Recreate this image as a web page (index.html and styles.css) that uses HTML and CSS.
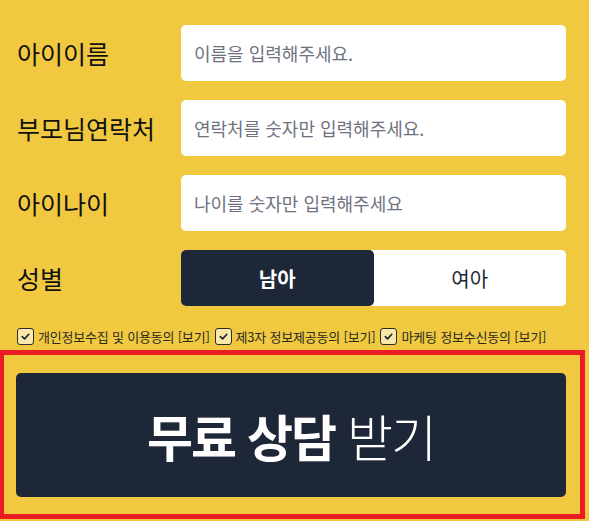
FILE: index.html
```html
<!DOCTYPE html>
<html lang="ko">
<head>
    <meta charset="UTF-8">
    <meta name="viewport" content="width=device-width, initial-scale=1.0">
    <title>무료 상담 신청</title>
    <link rel="stylesheet" href="styles.css">
</head>
<body>

    <form class="consult-form">
        <div class="fields">
            <label class="field-label" for="child-name">아이이름</label>
            <input class="field-input" type="text" id="child-name" placeholder="이름을 입력해주세요.">

            <label class="field-label" for="parent-phone">부모님연락처</label>
            <input class="field-input" type="tel" id="parent-phone" placeholder="연락처를 숫자만 입력해주세요.">

            <label class="field-label" for="child-age">아이나이</label>
            <input class="field-input" type="text" id="child-age" placeholder="나이를 숫자만 입력해주세요">

            <span class="field-label">성별</span>
            <div class="gender">
                <button type="button" class="gender-btn active">남아</button>
                <button type="button" class="gender-btn">여아</button>
            </div>
        </div>

        <div class="agree-row">
            <label class="agree">
                <span class="check"><svg viewBox="0 0 12 12" width="11" height="11"><path d="M2.5 6.2 L5 8.6 L9.6 3.6" fill="none" stroke="#1e2738" stroke-width="1.8" stroke-linecap="round" stroke-linejoin="round"/></svg></span>
                개인정보수집 및 이용동의 [보기]
            </label>
            <label class="agree">
                <span class="check"><svg viewBox="0 0 12 12" width="11" height="11"><path d="M2.5 6.2 L5 8.6 L9.6 3.6" fill="none" stroke="#1e2738" stroke-width="1.8" stroke-linecap="round" stroke-linejoin="round"/></svg></span>
                제3자 정보제공동의 [보기]
            </label>
            <label class="agree">
                <span class="check"><svg viewBox="0 0 12 12" width="11" height="11"><path d="M2.5 6.2 L5 8.6 L9.6 3.6" fill="none" stroke="#1e2738" stroke-width="1.8" stroke-linecap="round" stroke-linejoin="round"/></svg></span>
                마케팅 정보수신동의 [보기]
            </label>
        </div>

        <div class="submit-box">
            <button type="submit" class="submit-btn"><b>무료 상담</b> 받기</button>
        </div>
    </form>

</body>
</html>
```

FILE: styles.css
```css
body {
    margin: 0;
    background: #f1c940;
    font-family: "Noto Sans CJK KR", "Noto Sans", sans-serif;
    color: #111;
    overflow: hidden;
}
.consult-form {
    padding-top: 25px;
}
.fields {
    display: grid;
    grid-template-columns: 164px 385px;
    grid-auto-rows: 56px;
    row-gap: 19px;
    padding-left: 17px;
}
.field-label {
    display: flex;
    align-items: center;
    font-size: 25px;
    font-weight: 400;
    color: #111;
}
.field-input {
    border: none;
    border-radius: 5px;
    background: white;
    padding: 0 13px;
    font-family: inherit;
    font-size: 18px;
    outline: none;
}
.field-input::placeholder {
    color: #6e7280;
}
.gender {
    display: flex;
    background: white;
    border-radius: 5px;
}
.gender-btn {
    flex: 1;
    border: none;
    border-radius: 5px;
    background: white;
    font-family: inherit;
    font-size: 20px;
    color: #1e2738;
    cursor: pointer;
}
.gender-btn.active {
    background: #1e2738;
    color: white;
    font-weight: 700;
}
.agree-row {
    display: flex;
    gap: 5px;
    padding: 21px 0 0 17px;
    height: 19px;
}
.agree {
    display: flex;
    align-items: center;
    gap: 4px;
    font-size: 13px;
    letter-spacing: -0.2px;
    color: #2a2a22;
    white-space: nowrap;
}
.check {
    display: flex;
    align-items: center;
    justify-content: center;
    width: 15px;
    height: 15px;
    border: 1.5px solid #2c2c2c;
    border-radius: 3px;
    background: #fbe8a6;
}
.submit-box {
    width: 550px;
    margin: 4px 0 0 -1px;
    border: 5px solid #ec1c24;
    padding: 18px 14px 17px 12px;
}
.submit-btn {
    display: block;
    width: 100%;
    height: 124px;
    border: none;
    border-radius: 5px;
    background: #1e2738;
    color: white;
    font-family: inherit;
    font-size: 50px;
    font-weight: 300;
    letter-spacing: -2px;
    cursor: pointer;
}
.submit-btn b {
    font-weight: 700;
}
```
